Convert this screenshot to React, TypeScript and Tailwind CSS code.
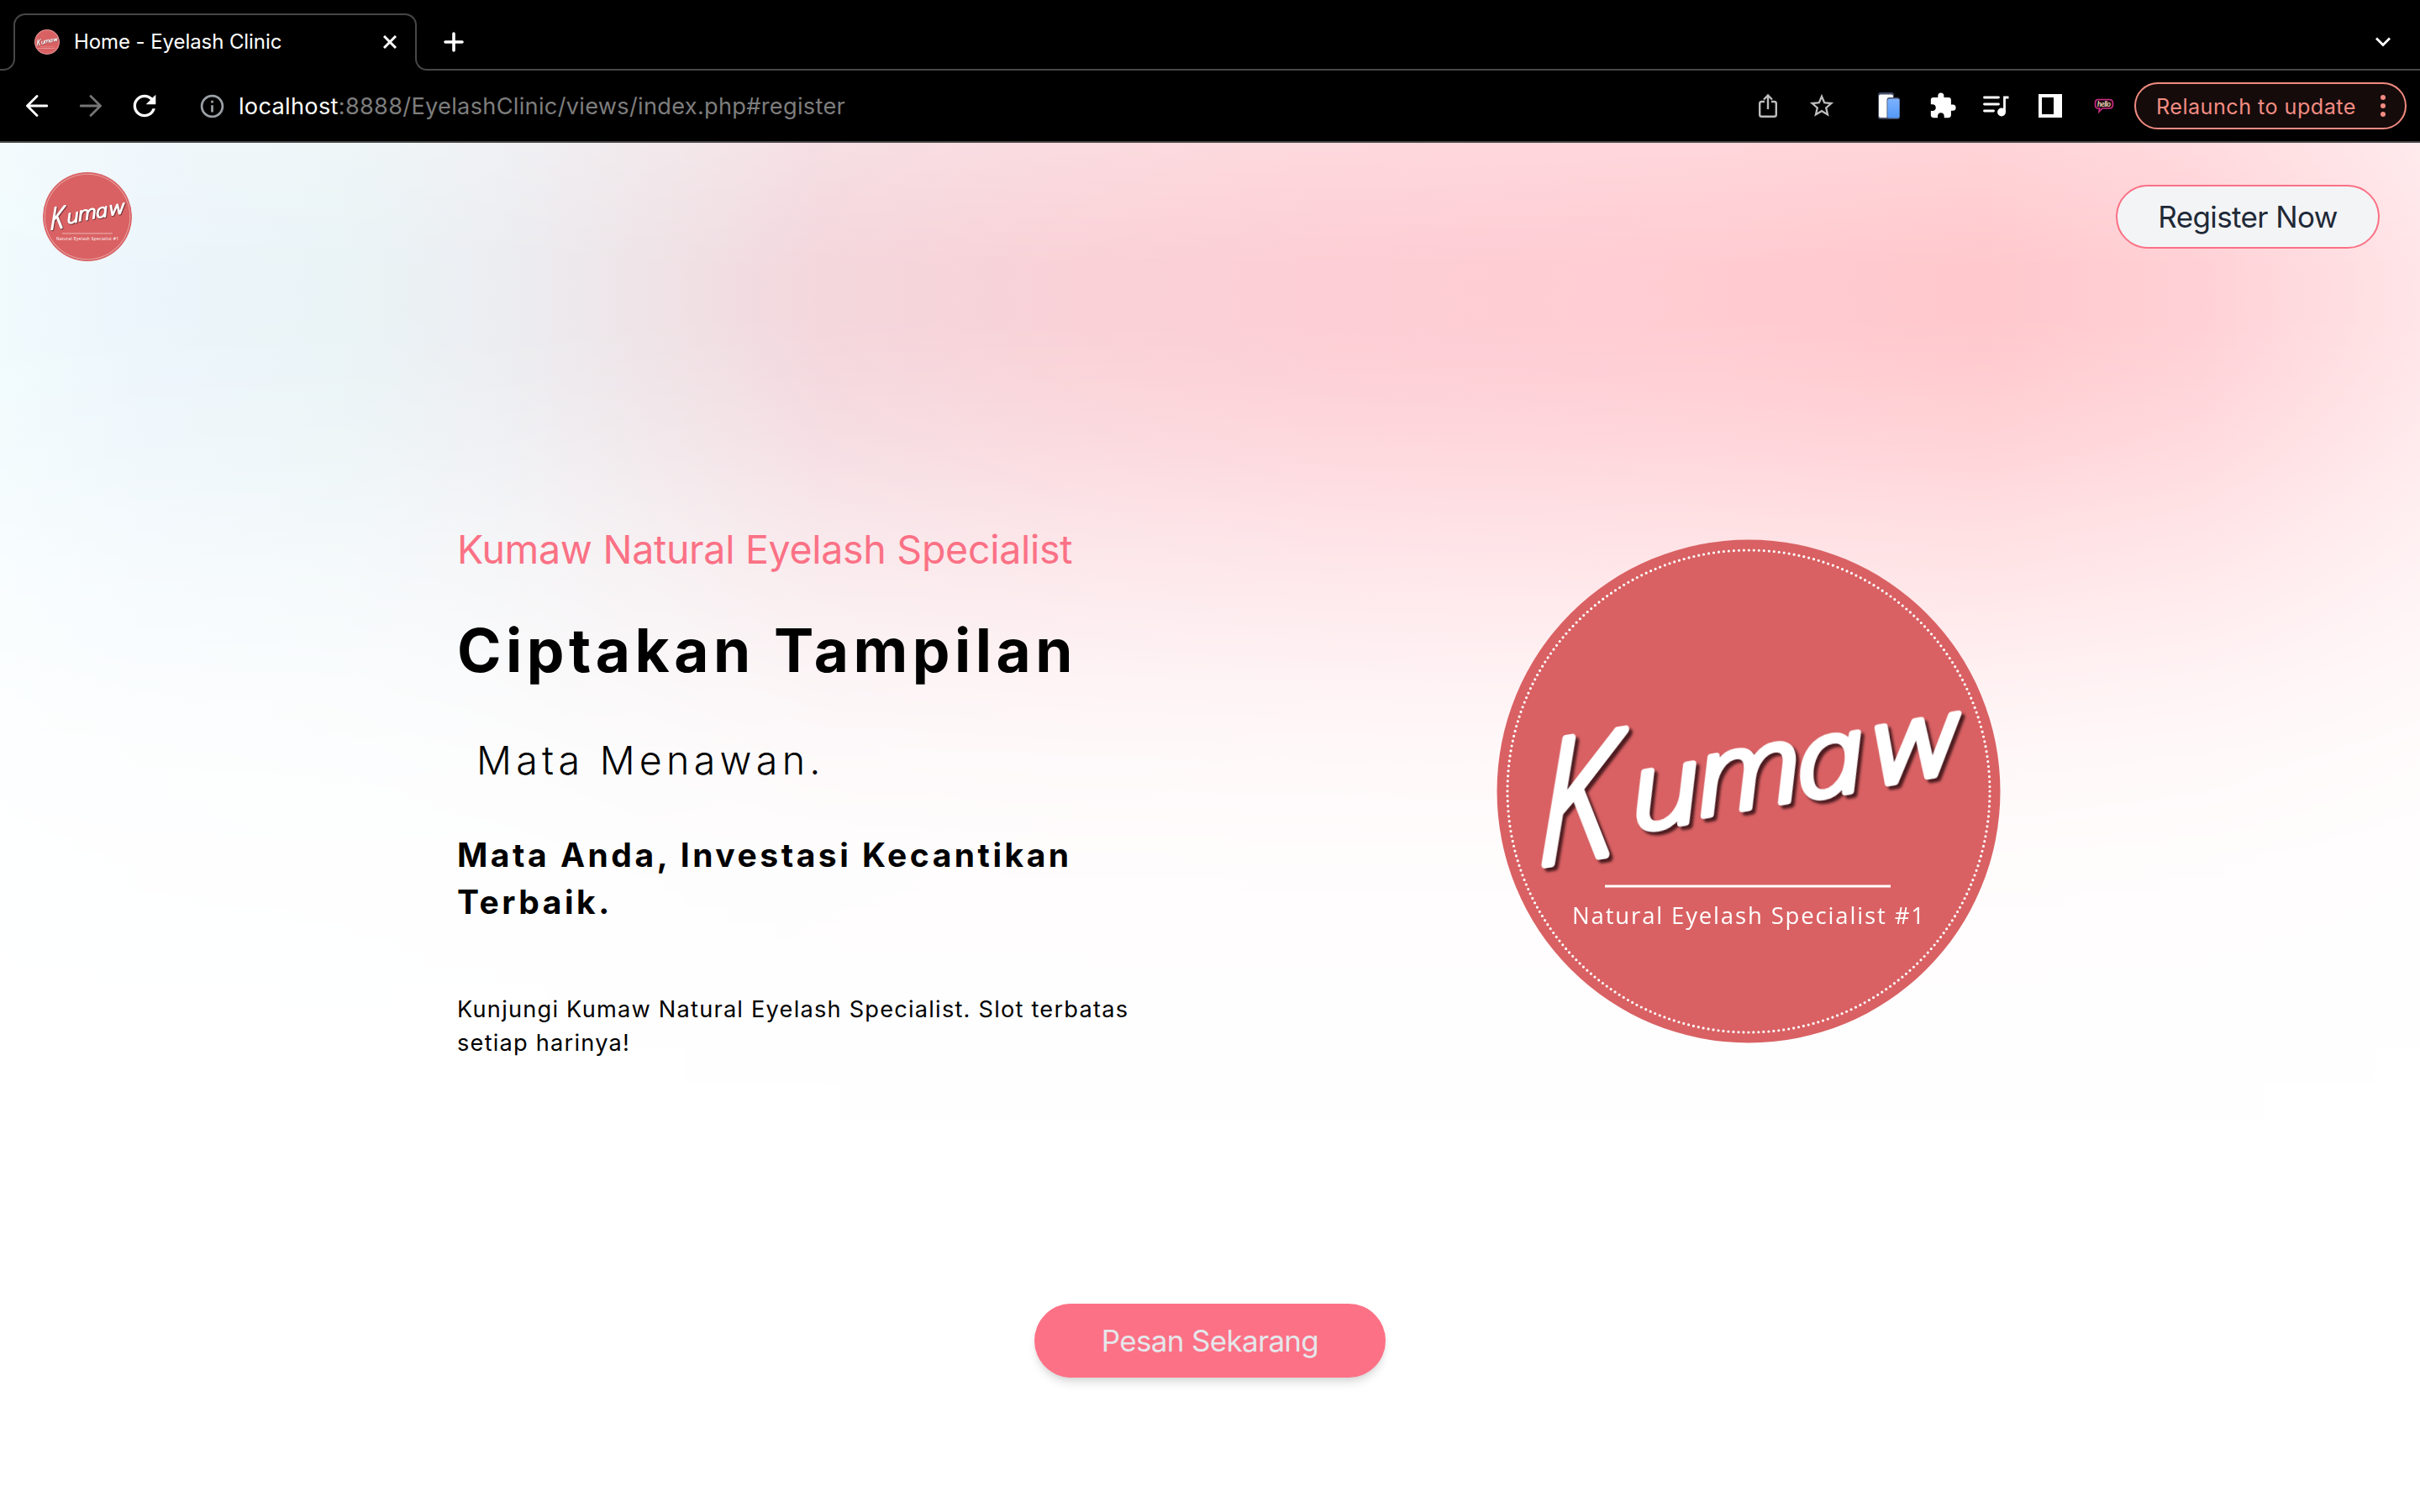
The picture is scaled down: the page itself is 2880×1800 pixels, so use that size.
import React from 'react';
import { MdRefresh, MdInfoOutline, MdStarBorder, MdExtension } from 'react-icons/md';

function KumawLogo({ className }: { className: string }) {
  return (
    <svg viewBox="0 0 600 600" className={className} aria-label="Kumaw">
      <circle cx="300" cy="300" r="299.5" fill="#d96163" />
      <circle
        cx="300"
        cy="300"
        r="287"
        fill="none"
        stroke="#fff"
        strokeWidth="3.2"
        strokeLinecap="round"
        strokeDasharray="0 6.01"
      />
      <g
        className="font-['Open_Sans',sans-serif] italic font-light [filter:drop-shadow(4px_4px_1.5px_rgba(40,10,15,0.8))]"
        fill="#fff"
        stroke="#fff"
        strokeLinejoin="round"
        strokeLinecap="round"
      >
        <text transform="translate(50 388) skewY(-9) scale(0.8 1)" fontSize="204" strokeWidth="10">
          K
        </text>
        <text
          transform="matrix(1.15 -0.2 0.12 1 0 0)"
          x="105 173 276 357"
          y="369 364 366 364"
          fontSize="126"
          strokeWidth="7.5"
        >
          umaw
        </text>
      </g>
      <rect x="129" y="411.5" width="340" height="3" fill="#fff" />
      <text
        x="90"
        y="457.5"
        fontSize="27.5"
        fill="#fff"
        textLength="419"
        lengthAdjust="spacing"
        className="font-['Open_Sans',sans-serif]"
      >
        Natural Eyelash Specialist #1
      </text>
    </svg>
  );
}

function TabStrip() {
  return (
    <div className="flex h-[84px] items-start">
      <div className="mt-[68px] h-4 w-[18px] rounded-br-[14px] border-r-2 border-b-2 border-[#474747]" />
      <div className="-ml-0.5 mt-4 flex h-[52px] w-[480px] items-center rounded-t-[14px] border-x-2 border-t-2 border-[#474747] pt-[14px] pr-[22px] pl-[23px]">
        <KumawLogo className="size-[30px] shrink-0" />
        <span className="ml-[17px] flex-1 text-[24px] leading-[36px] tracking-[-0.08px] whitespace-nowrap text-white">
          Home - Eyelash Clinic
        </span>
        <svg viewBox="0 0 16 16" className="size-4 text-white" fill="none" stroke="currentColor" strokeWidth="3">
          <path d="M1 1l14 14M15 1L1 15" />
        </svg>
      </div>
      <div className="-ml-0.5 flex h-[84px] flex-1 flex-col">
        <div className="flex h-[68px] items-center justify-between pt-8 pr-[35px] pl-[34px] text-white">
          <svg viewBox="0 0 24 24" className="size-6" fill="none" stroke="currentColor" strokeWidth="3.6" strokeLinecap="round">
            <path d="M12 2v20M2 12h20" />
          </svg>
          <svg viewBox="0 0 18 12" className="h-3 w-[18px]" fill="none" stroke="currentColor" strokeWidth="2.8">
            <path d="M1 1.5l8 8 8-8" />
          </svg>
        </div>
        <div className="h-4 rounded-bl-[14px] border-b-2 border-l-2 border-[#474747]" />
      </div>
    </div>
  );
}

function Toolbar() {
  return (
    <div className="flex h-[86px] items-center border-b-2 border-[#474747] pr-4 pl-[31px]">
      <svg viewBox="0 0 26 26" className="size-[26px] text-white" fill="none" stroke="currentColor" strokeWidth="2.8" strokeLinecap="round">
        <path d="M25 13H2M13 1.5L1.5 13 13 24.5" />
      </svg>
      <svg viewBox="0 0 26 26" className="ml-[38px] size-[26px] text-[#757575]" fill="none" stroke="currentColor" strokeWidth="2.8" strokeLinecap="round">
        <path d="M1 13h23M13 1.5L24.5 13 13 24.5" />
      </svg>
      <MdRefresh className="ml-[31px] size-[40px] text-white" />
      <MdInfoOutline className="ml-[44px] size-[33px] text-[#9aa0a6]" />
      <div className="ml-[15px] flex-1 pt-px text-[27.2px] leading-10 tracking-[0.29px] whitespace-nowrap text-[#7d7d7d]">
        <span className="text-white">localhost</span>:8888/EyelashClinic/views/index.php#register
      </div>
      <svg viewBox="0 0 24 30" className="h-[30px] w-6 text-[#bdbdbd]" fill="none" stroke="currentColor" strokeWidth="2.4">
        <path d="M8 10H4.5Q2.2 10 2.2 12.3V25.5Q2.2 27.8 4.5 27.8H19.5Q21.8 27.8 21.8 25.5V12.3Q21.8 10 19.5 10H16M12 19V3M7 7.5l5-5 5 5" />
      </svg>
      <MdStarBorder className="ml-[35px] size-[34px] text-[#bdbdbd]" />
      <svg viewBox="0 0 26 32" className="ml-[50px] h-8 w-[26px]">
        <defs>
          <linearGradient id="tablet" x1="0" y1="0" x2="0" y2="1">
            <stop offset="0" stopColor="#7db2ff" />
            <stop offset="1" stopColor="#5499f8" />
          </linearGradient>
        </defs>
        <rect x="0" y="0" width="19" height="32" rx="3" fill="#434b63" />
        <rect x="1" y="2.5" width="17" height="27.5" rx="2" fill="#fff" />
        <rect x="10.5" y="6" width="15.5" height="26" rx="3" fill="#434b63" />
        <rect x="11.3" y="7.5" width="14.2" height="23" rx="2" fill="url(#tablet)" />
      </svg>
      <MdExtension className="ml-[34px] size-[34px] text-white" />
      <svg viewBox="0 0 32 26" className="ml-[31px] h-[26px] w-8 text-white" fill="none" stroke="currentColor" strokeWidth="2.8" strokeLinecap="round">
        <path d="M1.5 3h17M1.5 11h17M1.5 19h11" />
        <path d="M25.5 20V3h5" strokeLinecap="butt" />
        <circle cx="22" cy="20.5" r="4.9" fill="currentColor" stroke="none" />
      </svg>
      <svg viewBox="0 0 28 28" className="ml-[34px] size-7">
        <path fill="#fff" fillRule="evenodd" d="M0 0h28v28H0zM4 4v20h14V4z" />
      </svg>
      <svg viewBox="0 0 24 18" className="ml-[38px] h-[18px] w-6">
        <path
          d="M5 1.5H18Q22.5 1.5 22.5 5.5V8Q22.5 12 18 12H10L6 16 6.5 12H5Q1.5 12 1.5 8V5.5Q1.5 1.5 5 1.5Z"
          fill="#1c0612"
          stroke="#d22a86"
          strokeWidth="1.6"
        />
        <text x="4" y="10.3" fontSize="9" fontWeight="600" fontStyle="italic" fill="#fbe3c0" textLength="16" className="font-['Lato',sans-serif]">
          hello
        </text>
      </svg>
      <div className="ml-6 flex h-14 w-[324px] items-center rounded-full border-2 border-[#f28b82] bg-[#150b0a] pl-6 text-[#f28b82]">
        <span className="w-[263px] pt-0.5 text-[25.2px] leading-9 tracking-[0.46px] whitespace-nowrap">Relaunch to update</span>
        <span className="ml-1 flex flex-col gap-1">
          <i className="size-1.5 rounded-full bg-[#f28b82]" />
          <i className="size-1.5 rounded-full bg-[#f28b82]" />
          <i className="size-1.5 rounded-full bg-[#f28b82]" />
        </span>
      </div>
    </div>
  );
}

export default function App() {
  return (
    <div className="flex h-[1800px] w-[2880px] flex-col overflow-hidden bg-white font-['Inter',sans-serif] text-black">
      <header className="h-[170px] shrink-0 bg-black">
        <TabStrip />
        <Toolbar />
      </header>

      <main className="relative isolate flex-1">
        <div className="absolute inset-0 -z-10 bg-[linear-gradient(to_right,#f0fafd_0%,#ebf5fb_6%,#e9f3f6_14%,#ebecf0_21%,#eee2e6_27%,#f3d5db_34%,#f9d0d6_44%,#fdccd3_55%,#ffcad0_70%,#ffc6cb_82%,#ffcfd4_91%,#ffe4e7_100%)] [mask-image:linear-gradient(to_bottom,rgba(0,0,0,0.76)_0%,rgba(0,0,0,0.87)_5%,rgba(0,0,0,0.96)_9%,rgba(0,0,0,0.96)_13%,rgba(0,0,0,0.89)_17%,rgba(0,0,0,0.76)_22%,rgba(0,0,0,0.56)_28%,rgba(0,0,0,0.39)_34%,rgba(0,0,0,0.25)_39%,rgba(0,0,0,0.13)_45%,rgba(0,0,0,0.06)_52%,rgba(0,0,0,0.025)_62%,transparent_78%)]" />

        <nav className="flex h-[176px] items-center justify-between pr-12 pl-[51px]">
          <KumawLogo className="size-[106px]" />
          <button className="h-[76px] w-[314px] rounded-full border-2 border-[#fb7185] bg-gray-100 text-[35px] leading-none tracking-[-0.61px] text-[#1f2937]">
            Register Now
          </button>
        </nav>

        <section className="flex items-start pt-[284px] pl-[544px]">
          <div className="w-[816px]">
            <p className="text-[46.5px] leading-[48px] tracking-[-0.29px] whitespace-nowrap text-[#fb7185]">
              Kumaw Natural Eyelash Specialist
            </p>
            <h1 className="mt-[60px] text-[71px] leading-[72px] font-bold tracking-[5.5px] whitespace-nowrap">
              Ciptakan Tampilan
            </h1>
            <p className="mt-[71px] pl-[23px] text-[46.5px] leading-[48px] font-light tracking-[5.3px]">Mata Menawan.</p>
            <h2 className="mt-[61px] text-[39px] leading-[56px] font-bold tracking-[3.52px] whitespace-nowrap">
              Mata Anda, Investasi Kecantikan
              <br />
              Terbaik.
            </h2>
            <p className="mt-[80px] text-[27.2px] leading-10 tracking-[1.22px] whitespace-nowrap">
              Kunjungi Kumaw Natural Eyelash Specialist. Slot terbatas
              <br />
              setiap harinya!
            </p>
          </div>
          <KumawLogo className="mt-3 ml-[421px] size-[600px]" />
        </section>

        <div className="mt-[290px] flex justify-center">
          <button className="h-[88px] w-[418px] rounded-full bg-[#fd7186] text-[35px] leading-none tracking-[-0.69px] text-gray-200 shadow-[0_8px_12px_-2px_rgba(0,0,0,0.12),0_4px_8px_-4px_rgba(0,0,0,0.1)]">
            Pesan Sekarang
          </button>
        </div>
      </main>
    </div>
  );
}
